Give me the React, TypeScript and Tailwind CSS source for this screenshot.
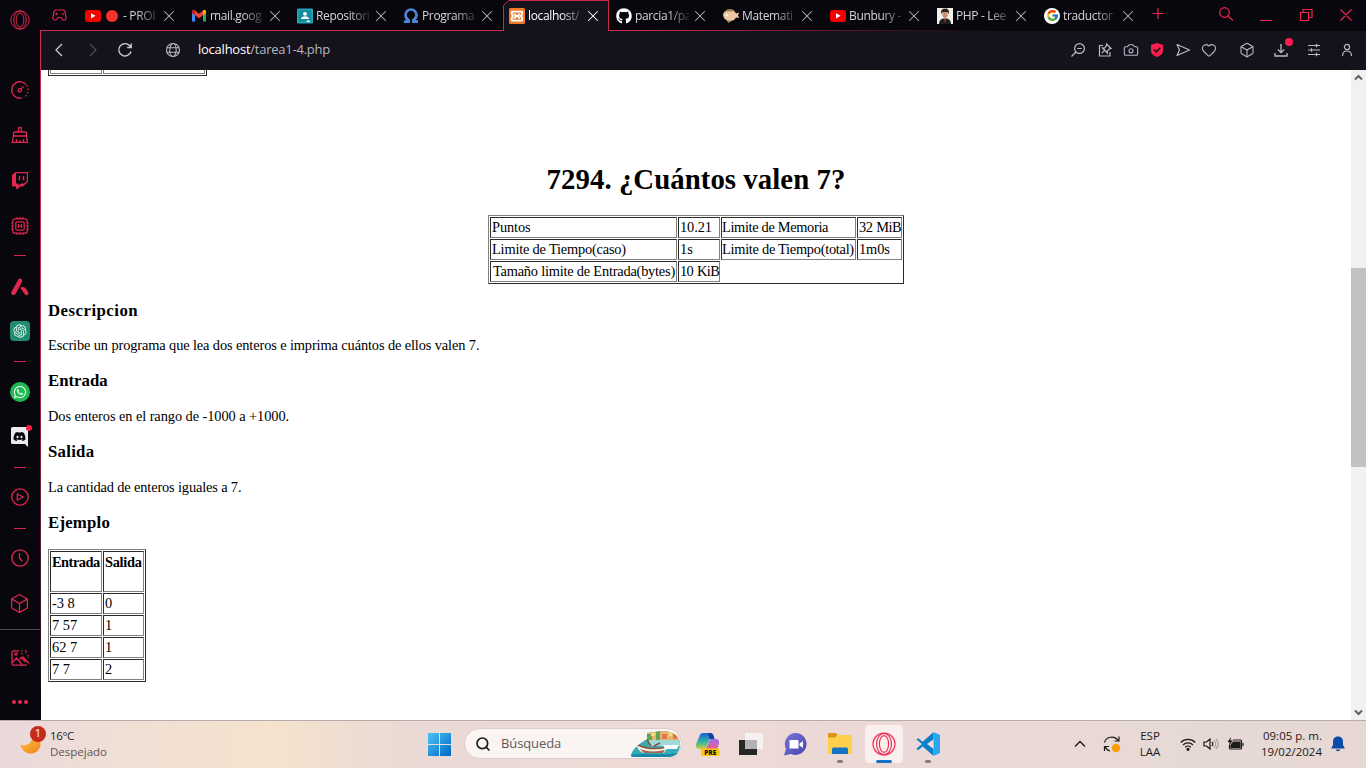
import type { ReactNode } from "react";
import { Box, Camera, Heart, X, Search } from "lucide-react";
import { FaGithub, FaWhatsapp, FaDiscord } from "react-icons/fa";
import { FcGoogle } from "react-icons/fc";
import { RiOpenaiFill } from "react-icons/ri";

const Opera = ({ className }: { className: string }) => (
  <svg viewBox="0 0 24 24" className={className} fill="none" stroke="currentColor" strokeWidth="1.2">
    <circle cx="12" cy="12" r="11" />
    <ellipse cx="12" cy="12" rx="7.5" ry="10.6" />
    <ellipse cx="12" cy="12" rx="4.6" ry="8.4" />
  </svg>
);

const YouTube = () => (
  <svg viewBox="0 0 16 16" className="size-4">
    <rect y="2" width="16" height="12" rx="3" fill="#f60000" />
    <path d="M6 5.2v5.2l4.6-2.6z" fill="#fff" />
  </svg>
);

const Gmail = () => (
  <svg viewBox="0 0 16 16" className="size-4">
    <path d="M1 3v10.5h3V7z" fill="#4285f4" />
    <path d="M15 3v10.5h-3V7z" fill="#34a853" />
    <path d="M1 5V3.6C1 2 3 1.600 4 2.500l4 3.300 4-3.300c1-.9 3-.5 3 1.100V5L8 10.300z" fill="#ea4335" />
    <path d="M12 2.500c1-.9 3-.5 3 1.100V5l-3 2.300z" fill="#fbbc04" />
    <path d="M4 2.500C3 1.600 1 2 1 3.600V5l3 2.300z" fill="#c5221f" />
  </svg>
);

const Classroom = () => (
  <svg viewBox="0 0 16 16" className="size-4">
    <rect width="16" height="15" y=".5" rx="1" fill="#26a5b5" />
    <rect x="1.500" y="2" width="13" height="12" fill="#128c9e" />
    <circle cx="8" cy="5.800" r="1.900" fill="#fff" />
    <path d="M4 11c0-2 2-2.800 4-2.800s4 .8 4 2.800z" fill="#fff" />
    <path d="M9.500 12.500h3.500v1.500H9.500z" fill="#e5f5f5" />
  </svg>
);

const Omega = () => (
  <svg viewBox="0 0 16 16" className="size-4" fill="none" stroke="#4d86d9" strokeWidth="2.700">
    <path d="M1 13.700h4.600v-1.500C3.500 10.800 2.500 9 2.500 7a5.500 5.500 0 0 1 11 0c0 2-1 3.800-3.100 5.200v1.500H15" />
  </svg>
);

const Xampp = () => (
  <svg viewBox="0 0 16 16" className="size-4">
    <rect width="16" height="16" rx="1.500" fill="#ee7a2a" />
    <g fill="none" stroke="#fff" strokeWidth="1.800">
      <path d="M3 3.600h10c.8 2.300.2 3.600-1.500 4.400 1.700.8 2.300 2.200 1.500 4.600H3C2.200 10.200 2.800 8.800 4.500 8 2.800 7.200 2.200 5.900 3 3.600z" strokeLinejoin="round" />
      <path d="M5.500 5.500c.3 1.700 1 2.300 2.500 2.300s2.200-.6 2.500-2.300M5.500 10.800c.3-1.700 1-2.600 2.500-2.600s2.200.9 2.500 2.600" strokeWidth="1.500" />
    </g>
  </svg>
);

const GitHub = () => <FaGithub className="size-4 text-white" />;

const Fish = () => (
  <svg viewBox="0 0 16 16" className="size-4">
    <path d="M0 7c1-4 4-5.500 7.500-5.500C10 1.500 12 3.500 13 5.500l3-1-1 3 1 2.500-3-.5c-1 2-2.500 3-4.500 3.300l-3 2-1.500-2.300C1.500 11.500.5 9.500 0 7z" fill="#ecc9a2" />
    <path d="M2 3.500 4 1.500l5-.3L12 3 8 3.500z" fill="#a37c52" />
    <circle cx="4" cy="7" r="1.500" fill="#f9eadb" />
    <path d="m4 12.500 2.500-.5 1.500 1-2.500 1.500z" fill="#b78a5c" />
  </svg>
);

const Portrait = () => (
  <svg viewBox="0 0 16 16" className="size-4">
    <path d="M0 0h16v16H0z" fill="#f0efe9" />
    <path d="M2 16c0-3 1.500-5 4-5.500h4c2.500.5 4 2.500 4 5.500z" fill="#202021" />
    <path d="M5.500 4h5v4L8.500 10.500h-1L5.500 8z" fill="#c98f73" />
    <path d="M4.500 6.500 4 3l2-2.200 4-.3L12 3l-.5 3.500-1-2.500h-5z" fill="#29211f" />
    <path d="m7 11 1 4 1-4z" fill="#b32b35" />
  </svg>
);

const Google = () => (
  <span className="flex size-4 items-center justify-center rounded-full bg-white">
    <FcGoogle className="size-[13px]" />
  </span>
);

type Tab = { title: string; icon: () => ReactNode; active?: boolean; dot?: boolean; wide?: boolean };

const tabs: Tab[] = [
  { title: "- PROI", icon: YouTube, dot: true },
  { title: "mail.goog", icon: Gmail },
  { title: "Repositori", icon: Classroom },
  { title: "Programa", icon: Omega },
  { title: "localhost/", icon: Xampp, active: true, wide: true },
  { title: "parcia1/pa", icon: GitHub, wide: true },
  { title: "Matemati", icon: Fish, wide: true },
  { title: "Bunbury -", icon: YouTube, wide: true },
  { title: "PHP - Lee", icon: Portrait, wide: true },
  { title: "traductor", icon: Google, wide: true },
];

function TabItem({ tab }: { tab: Tab }) {
  const Icon = tab.icon;
  return (
    <div className={`relative flex h-[31px] shrink-0 items-center pl-[6px] ${tab.wide ? "w-[107px]" : "w-[106px]"}`}>
      {tab.active && (
        <svg viewBox="0 0 107 31" className="absolute left-0 top-0 h-[31px] w-[107px]">
          <path d="M.5 31V5.500L5.500.5h100V31z" fill="#14121a" />
          <path d="M.5 31V5.500L5.500.5h100V31" fill="none" stroke="#c9284f" />
        </svg>
      )}
      <span className="relative flex w-4 shrink-0">
        <Icon />
      </span>
      <span
        className={`relative ml-[3px] flex w-[54px] items-center whitespace-nowrap text-[12px] leading-5 tracking-[-0.35px] [mask-image:linear-gradient(to_right,#000_60%,rgba(0,0,0,0.15))] ${tab.active ? "text-white" : "text-[#d5d4da]"}`}
      >
        {tab.dot && <i className="ml-[2px] mr-[5px] size-3 shrink-0 rounded-full bg-[#f5332e]" />}
        {tab.title}
      </span>
      <X className={`relative ml-[2px] size-[18px] shrink-0 ${tab.active ? "text-white" : "text-[#b5b3bb]"}`} strokeWidth={1.400} />
    </div>
  );
}

function Rail() {
  const dash = "h-px w-3 shrink-0 bg-[#d42450]";
  const box = "flex size-[22px] shrink-0 items-center justify-center";
  return (
    <aside className="flex w-10 shrink-0 flex-col items-center bg-[#08070d] text-[#e0274f]">
      <div className={`${box} mt-[9px]`}><Opera className="size-5" /></div>
      <div className={`${box} mt-12`}>
        <svg viewBox="0 0 20 20" className="size-5" fill="none" stroke="currentColor" strokeWidth="1.300">
          <path d="M12 17.900A8.200 8.200 0 1 1 16 4.500" />
          <path d="M16.500 5.200a8.200 8.200 0 0 1-3 12.300" strokeDasharray="1.500 2" />
          <circle cx="9.700" cy="10.300" r="1.700" />
          <path d="m11 9 2.500-2.500" />
        </svg>
      </div>
      <div className={`${box} mt-[23px]`}>
        <svg viewBox="0 0 20 20" className="size-5" fill="none" stroke="currentColor" strokeWidth="1.300">
          <path d="M8.500 7V3.200c0-1 2.800-1 2.800 0V7M3.500 11V8.500C3.500 7.500 4 7 5 7h10c1 0 1.500.5 1.500 1.500V11zM3.500 11 2.300 17.400h15.200L16.500 11M6.500 17v-3M10.200 17v-2M13.500 17v-3" />
        </svg>
      </div>
      <div className={`${box} mt-[23px]`}>
        <svg viewBox="0 0 20 20" className="size-5">
          <path d="M2 5 5.500 2H18v9.500l-5 5H10L7.500 19H6v-2.500H2z" fill="currentColor" />
          <path d="M6 3.200h10.800V11L14 13.500h-3l-2.500 2v-2H6z" fill="#08070d" />
          <path d="M9.500 6v4.300M13.500 6v4.300" stroke="currentColor" strokeWidth="1.500" />
        </svg>
      </div>
      <div className={`${box} mt-6`}>
        <svg viewBox="0 0 20 20" className="size-5" fill="none" stroke="currentColor" strokeWidth="1.200">
          <rect x="2.800" y="2.800" width="14.400" height="14.400" rx="2" />
          <rect x="5.800" y="5.800" width="8.400" height="8.400" rx="1.500" />
          <path d="M8.500 8v4m3-4v4m-3-2h3M7 1v2m3-2v2m3-2v2M7 17v2m3-2v2m3-2v2M1 7h2M1 10h2M1 13h2m14-6h2m-2 3h2m-2 3h2" />
        </svg>
      </div>
      <div className={`${dash} mt-[18px]`} />
      <div className={`${box} mt-5`}>
        <svg viewBox="0 0 20 20" className="size-5" fill="currentColor">
          <path d="M8.200 2.800c.7-1.300 2-1.500 3.200-.8 1 .7 1.100 1.800.5 2.900L5.700 16.800c-.8 1.300-2.200 1.700-3.400 1-1.200-.7-1.500-1.900-.7-3.200zM10.200 10.800c2.500-1.500 5.400-.5 6.500 1.700l1.500 2.900c.5 1.300 0 2.500-1 2.800-1.100.3-1.900-.3-2.600-1.100z" />
        </svg>
      </div>
      <div className={`${box} mt-[22px]`}>
        <span className="flex size-5 items-center justify-center rounded-[4px] bg-[#218c70] text-[#e4f5f0]"><RiOpenaiFill className="size-4" /></span>
      </div>
      <div className={`${dash} mt-[19px]`} />
      <div className={`${box} mt-[19px]`}>
        <span className="flex size-5 items-center justify-center rounded-full bg-[#1fb954] text-white"><FaWhatsapp className="size-[14px]" /></span>
      </div>
      <div className={`${box} relative mt-[23px]`}>
        <svg viewBox="0 0 20 20" className="size-5">
          <path d="M2.500 0h14A1.500 1.500 0 0 1 18 1.500V20l-3-3H2.500A1.500 1.500 0 0 1 1 15.500v-14A1.500 1.500 0 0 1 2.500 0z" fill="#ececef" />
        </svg>
        <FaDiscord className="absolute left-[4px] top-[4px] size-[13px] text-[#08070d]" />
        <i className="absolute -right-px -top-px size-[6px] rounded-full bg-[#fa1e4e]" />
      </div>
      <div className={`${dash} mt-[19px]`} />
      <div className={`${box} mt-[18px]`}>
        <svg viewBox="0 0 20 20" className="size-5" fill="none" stroke="currentColor" strokeWidth="1.300">
          <circle cx="10" cy="10" r="8.200" />
          <path d="M7.300 7v6l6-3z" strokeLinejoin="round" />
        </svg>
      </div>
      <div className={`${dash} mt-5`} />
      <div className={`${box} mt-[18px]`}>
        <svg viewBox="0 0 20 20" className="size-5" fill="none" stroke="currentColor" strokeWidth="1.300">
          <circle cx="10" cy="10" r="8.200" />
          <path d="M9.500 5v5l2.800 3.200" />
        </svg>
      </div>
      <div className={`${box} mt-[23px]`}><Box className="mr-px size-[21px]" strokeWidth={1.400} /></div>
      <div className="mt-[15px] h-px w-full shrink-0 bg-[#4a494e]" />
      <div className={`${box} mt-[17px]`}>
        <svg viewBox="0 0 20 20" className="size-5" fill="none" stroke="currentColor" strokeWidth="1.300">
          <path d="M9 2.800H3.500A1.500 1.500 0 0 0 2 4.300v11.400c0 .8.700 1.500 1.500 1.500H17M2 15l4.500-5L12 16.500M9.500 11.500l2-2 4 4.500M12.500 8.500l6.500 7" />
          <circle cx="6" cy="6" r="1.100" />
          <path d="M11 2.800h2m2 0h2.500M12 5v2m4-4v3m2 1v3" strokeDasharray="1.500 1" />
        </svg>
      </div>
      <div className={`${box} mt-[22px] gap-[2px]`}>
        <i className="size-1 rounded-full bg-current" />
        <i className="size-1 rounded-full bg-current" />
        <i className="size-1 rounded-full bg-current" />
      </div>
    </aside>
  );
}

function TabBar() {
  return (
    <div className="relative flex h-[31px] shrink-0 bg-[#08070d]">
      <div className="absolute bottom-0 left-0 h-px w-full bg-linear-to-r from-[#d42a54] from-45% to-transparent to-72%" />
      <div className="flex h-[30px] w-[39px] shrink-0 items-center pl-[12px] text-[#e0274f]">
        <svg viewBox="0 0 15 12" className="h-3 w-[15px]" fill="none" stroke="currentColor" strokeWidth="1.200">
          <path d="M3.500 1h8L13 2.500 14.200 9 13 11h-2L9 8.500H6L4 11H2L.8 9 2 2.500zM4.500 3.700v2.600M3.200 5h2.600M9.600 5h.1M11 3.700v2.600" />
        </svg>
      </div>
      {tabs.map((t, i) => <TabItem key={i} tab={t} />)}
      <div className="flex h-[30px] flex-1 items-center pl-[5px] text-[#f0244f]">
        <svg viewBox="0 0 216 30" className="h-[30px] w-[216px] shrink-0" fill="none" stroke="currentColor" strokeWidth="1.200">
          <path d="M2.500 13.500h11M8 8v11" />
          <circle cx="74.500" cy="12.500" r="4.800" />
          <path d="m78 16 5 4.500M110 20.500h12M150.500 12.500h8v8h-8zM153 12.500v-3h9v8h-3.500M190.500 9.500l11 11M201.500 9.500l-11 11" />
        </svg>
      </div>
    </div>
  );
}

function Toolbar() {
  const slot = "flex h-full shrink-0 items-center justify-center";
  return (
    <div className="flex h-[39px] shrink-0 items-center bg-[#14121a] pb-px text-[#bcb8cb]">
      <div className={`${slot} w-[35px]`}>
        <svg viewBox="0 0 12 16" className="h-4 w-3" fill="none" stroke="#cdcad8" strokeWidth="1.300"><path d="M9 2 3 8l6 6" /></svg>
      </div>
      <div className={`${slot} w-[33px]`}>
        <svg viewBox="0 0 12 16" className="h-4 w-3" fill="none" stroke="#4b4855" strokeWidth="1.300"><path d="m3 2 6 6-6 6" /></svg>
      </div>
      <div className={`${slot} w-[32px]`}>
        <svg viewBox="0 0 16 16" className="size-4" fill="none" stroke="#cdcad8" strokeWidth="1.400"><path d="M14 9.500A6.200 6.200 0 1 1 12.500 3.500L14 5M14.200 1.500V5.500H10.200" /></svg>
      </div>
      <div className={`${slot} ml-2 w-[47px]`}>
        <svg viewBox="0 0 16 16" className="size-4" fill="none" stroke="currentColor" strokeWidth="1.100">
          <circle cx="8" cy="8" r="6.500" /><ellipse cx="8" cy="8" rx="3.200" ry="6.500" /><path d="M1.800 5.800h12.400M1.800 10.200h12.400" />
        </svg>
      </div>
      <p className="ml-[2px] text-[13px] tracking-[-0.24px] text-[#b9b7c4]"><span className="text-white">localhost</span>/tarea1-4.php</p>
      <div className="ml-auto flex h-full items-center">
        <div className={`${slot} w-[26px]`}>
          <svg viewBox="0 0 16 16" className="size-4" fill="none" stroke="currentColor" strokeWidth="1.200"><circle cx="9.500" cy="6.500" r="4.900" /><path d="M6 10 1.500 14.500M7.300 6.500h4.400" /></svg>
        </div>
        <div className={`${slot} w-[27px]`}>
          <svg viewBox="0 0 16 16" className="size-4" fill="none" stroke="currentColor" strokeWidth="1.200"><path d="M6 3.500H2.500v10.500h10.500V10M4.800 11.200 8 8M9.500 2l4.500 4.500-1.500.3-2.300 2.200.2 2L5.500 6l2 .2L9.300 4z" /></svg>
        </div>
        <div className={`${slot} w-[26px]`}><Camera className="size-4" strokeWidth={1.600} /></div>
        <div className={`${slot} w-[26px]`}>
          <svg viewBox="0 0 16 16" className="size-4"><path d="M8 1 14 2.800v5.700c0 3.200-2.500 5.500-6 6.500C4.500 14 2 11.700 2 8.500V2.800z" fill="#fa1e4e" /><path d="m5 7.500 2.300 2.300 4-4" fill="none" stroke="#14121a" strokeWidth="1.600" /></svg>
        </div>
        <div className={`${slot} w-[26px]`}>
          <svg viewBox="0 0 16 16" className="size-4" fill="none" stroke="currentColor" strokeWidth="1.200"><path d="M2 2.500 14.500 8 2 13.500 4.500 8z" strokeLinejoin="round" /></svg>
        </div>
        <div className={`${slot} w-[25px]`}><Heart className="size-4" strokeWidth={1.600} /></div>
        <div className={`${slot} ml-[9px] w-[34px]`}><Box className="size-4" strokeWidth={1.600} /></div>
        <div className={`${slot} relative w-[33px]`}>
          <svg viewBox="0 0 16 16" className="size-4" fill="none" stroke="currentColor" strokeWidth="1.300"><path d="M8 2v8.500M4.800 7.500 8 10.700l3.200-3.200M2 11v3h12v-3" /></svg>
          <i className="absolute right-1 top-[7px] size-2 rounded-full bg-[#fa1e4e]" />
        </div>
        <div className={`${slot} w-[33px]`}>
          <svg viewBox="0 0 14 14" className="size-[14px]" fill="none" stroke="currentColor" strokeWidth="1.200"><path d="M1 2.500h12M1 7h12M1 11.500h12M9.500.8v3.400M4.500 5.300v3.400M9.500 9.800v3.400" /></svg>
        </div>
        <div className={`${slot} mr-[3px] w-[33px]`}>
          <svg viewBox="0 0 14 14" className="size-[14px]" fill="none" stroke="currentColor" strokeWidth="1.200"><circle cx="7" cy="4" r="2.600" /><path d="M2.500 13c0-4 2-5 4.500-5s4.500 1 4.500 5" /></svg>
        </div>
      </div>
    </div>
  );
}

const tableStyle =
  "table-fixed border-separate border-spacing-[1px] border border-b-[#2c2c2c] border-l-[#808080] border-r-[#2c2c2c] border-t-[#808080] text-[14.4px] leading-[18px]";
const cell =
  "whitespace-nowrap border border-b-[#808080] border-l-[#2c2c2c] border-r-[#808080] border-t-[#2c2c2c] p-0 text-left align-top";
const row = `${cell} h-[21px]`;
const head = `${cell} h-[41px] pt-px`;

const sections = [
  { title: "Descripcion", text: "Escribe un programa que lea dos enteros e imprima cuántos de ellos valen 7.", box: "h-[70px]", heading: "tracking-[0.48px]", body: "mt-[15px] tracking-[-0.12px]" },
  { title: "Entrada", text: "Dos enteros en el rango de -1000 a +1000.", box: "h-[71px]", heading: "", body: "mt-4 tracking-[-0.08px]" },
  { title: "Salida", text: "La cantidad de enteros iguales a 7.", box: "h-[71px]", heading: "tracking-[0.25px]", body: "mt-4 tracking-[-0.15px]" },
];

const samples = [["-3 8", "0"], ["7 57", "1"], ["62 7", "1"], ["7 7", "2"]];

function Page() {
  return (
    <main className="flex min-w-0 flex-1 flex-col overflow-hidden bg-white pl-[7px] font-['Liberation_Serif',serif] text-black">
      <div className="flex h-[6px] w-[159px] shrink-0 border-x border-b border-[#2c2c2c] px-px pb-px">
        <div className="mr-px w-[52px] border-x border-b border-[#808080]" />
        <div className="flex-1 border-x border-b border-[#808080]" />
      </div>
      <h1 className="mt-[86px] pr-[7px] text-center text-[28.8px] font-bold leading-[34px] tracking-[0.05px]">7294. ¿Cuántos valen 7?</h1>
      <table className={`${tableStyle} ml-[440px] mt-[19px] w-[416px] shrink-0`}>
        <colgroup>
          <col className="w-[187px]" /><col className="w-[42px]" /><col className="w-[135px]" /><col className="w-[45px]" />
        </colgroup>
        <tbody>
          <tr>
            <td className={`${row} pl-px tracking-[-0.1px]`}>Puntos</td>
            <td className={`${row} pl-px tracking-[-0.1px]`}>10.21</td>
            <td className={`${row} tracking-[-0.34px]`}>Limite de Memoria</td>
            <td className={`${row} pl-px tracking-[-0.55px] [word-spacing:1px]`}>32 MiB</td>
          </tr>
          <tr>
            <td className={`${row} pl-px tracking-[-0.2px]`}>Limite de Tiempo(caso)</td>
            <td className={`${row} pl-px`}>1s</td>
            <td className={`${row} tracking-[-0.28px]`}>Limite de Tiempo(total)</td>
            <td className={`${row} pl-px tracking-[-0.1px]`}>1m0s</td>
          </tr>
          <tr>
            <td className={`${row} pl-[2px] tracking-[-0.22px]`}>Tamaño limite de Entrada(bytes)</td>
            <td className={`${row} pl-px tracking-[-0.65px] [word-spacing:1px]`}>10 KiB</td>
          </tr>
        </tbody>
      </table>
      <div className="pt-[17px]">
        {sections.map((s) => (
          <section key={s.title} className={s.box}>
            <h3 className={`text-[16.8px] font-bold leading-5 ${s.heading}`}>{s.title}</h3>
            <p className={`text-[14.4px] leading-[18px] ${s.body}`}>{s.text}</p>
          </section>
        ))}
        <h3 className="text-[16.8px] font-bold leading-5 tracking-[0.2px]">Ejemplo</h3>
      </div>
      <table className={`${tableStyle} mt-4 w-[98px] shrink-0`}>
        <colgroup><col className="w-[52px]" /><col className="w-[41px]" /></colgroup>
        <tbody>
          <tr><th className={`${head} pl-px tracking-[-0.5px]`}>Entrada</th><th className={`${head} pl-px tracking-[-0.3px]`}>Salida</th></tr>
          {samples.map(([a, b]) => <tr key={a}><td className={`${row} pl-px`}>{a}</td><td className={`${row} pl-px`}>{b}</td></tr>)}
        </tbody>
      </table>
    </main>
  );
}

function Scrollbar() {
  return (
    <div className="flex w-[15px] shrink-0 flex-col items-center justify-between bg-[#f1f1f1] py-1">
      <svg viewBox="0 0 9 7" className="h-[7px] w-[9px]" fill="none" stroke="#606060" strokeWidth="2"><path d="m1 5.500 3.500-3.500L8 5.500" /></svg>
      <div className="mt-[187px] mb-auto h-[199px] w-full bg-[#c1c1c1]" />
      <svg viewBox="0 0 9 7" className="h-[7px] w-[9px]" fill="none" stroke="#606060" strokeWidth="2"><path d="M1 1.500 4.500 5 8 1.500" /></svg>
    </div>
  );
}

function Taskbar() {
  return (
    <footer className="flex h-12 shrink-0 items-center border-t border-[#b5adab] bg-[linear-gradient(to_right,#ead8db_0%,#efdfd5_8%,#f5e3ce_20%,#f0dfd0_24%,#e9dad5_30%,#eedad6_50%,#ebd9d7_70%,#e6d9d5_90%,#e8d8d3_100%)] pb-[2px] text-[#1c1a1a]">
      <div className="relative ml-5 h-9 w-[30px]">
        <svg viewBox="0 0 22 22" className="absolute left-0 top-[10px] size-[22px]">
          <defs><linearGradient id="moon" x1="0" x2="1" y1="0" y2="1"><stop stopColor="#fbc34a" /><stop offset="1" stopColor="#ef8213" /></linearGradient></defs>
          <path d="M.3 8.500c5 2 11 0 12.200-7.500h5c8 8-1 20-11 15.700C2.800 15 .8 12 .3 8.500z" fill="url(#moon)" />
        </svg>
        <span className="absolute left-[10px] top-0 flex size-4 items-center justify-center rounded-full bg-[#c42b1c] text-[11px] text-white">1</span>
      </div>
      <div className="w-[100px] text-[11.5px] leading-4">
        <p className="tracking-[-0.35px]">16°C</p>
        <p className="text-[#5e5652]">Despejado</p>
      </div>
      <svg viewBox="0 0 24 24" className="ml-[278px] size-6">
        <defs><linearGradient id="win" x1="0" x2="1" y1="0" y2="1"><stop stopColor="#4cc4f5" /><stop offset="1" stopColor="#0067c5" /></linearGradient></defs>
        <path d="M0 1h11v11H0zM12 1h11v11H12zM0 13h11v11H0zM12 13h11v11H12z" fill="url(#win)" />
      </svg>
      <div className="ml-3 flex h-[31px] w-[218px] items-center rounded-full border border-[#dccbc9] bg-[#faf4f3] pl-[10px]">
        <Search className="size-4" strokeWidth={2.500} />
        <span className="ml-[10px] text-[13px] tracking-[-0.1px] text-[#5d5858]">Búsqueda</span>
        <svg viewBox="0 0 50 26" className="ml-auto mr-0 h-[26px] w-[50px]">
          <defs><clipPath id="art"><path d="M0 24c2-7 7-10 16-16l0-6 15-2c10 0 18 4 18 13S44 26 36 26H4c-2 0-4 0-4-2z" /></clipPath></defs>
          <g clipPath="url(#art)">
            <path d="M0 0h50v26H0z" fill="#35aab8" />
            <path d="M15 0h35v9H15z" fill="#e8b56a" />
            <path d="M16 3h5v7h-5zm9-3h4v9h-4z" fill="#5fa455" />
            <path d="M31 3h5v5h-5zM42 3h4v5h-4z" fill="#dd7a55" />
            <path d="M20 2h4v3h-4zm18-1h3v4h-3z" fill="#f8d785" />
            <path d="M18 9h32v6H18z" fill="#9ed9d8" />
            <path d="M6 14c6 3 20 4 31 2l-4 6H12c-4-2-6-5-6-8z" fill="#f4eee5" />
            <path d="M7 14c8 4 20 4 29 2M16 9l4 6m9-3-6 3" fill="none" stroke="#8b5138" strokeWidth="1.500" />
            <path d="M32 14h16l-2 4H34z" fill="#fff" />
            <path d="M9 18c7 3 16 3 25 1l-2 3H13z" fill="#a76550" />
            <path d="M0 24c12-3 34 2 50-3v5H0z" fill="#1786ab" />
          </g>
        </svg>
      </div>
      <svg viewBox="0 0 24 24" className="ml-[14px] size-6">
        <defs>
          <linearGradient id="cpa" x1="0" x2="0" y1="0" y2="1"><stop stopColor="#1c62d9" /><stop offset=".55" stopColor="#2fb6a0" /><stop offset="1" stopColor="#c9cf3b" /></linearGradient>
          <linearGradient id="cpb" x1="0" x2="0" y1="0" y2="1"><stop stopColor="#9d6bf0" /><stop offset="1" stopColor="#f2637a" /></linearGradient>
        </defs>
        <path d="M7 1h7c2 0 3 1 3.500 3l1 3h-5l-4 10H3c-2.500 0-3.500-2-3-4.500L3.500 4C4 2 5 1 7 1z" fill="url(#cpa)" />
        <path d="M14 7h6c2.500 0 3.500 2 3 4.500L21 18H9.500z" fill="url(#cpb)" />
        <path d="M12 1h2c2 0 3 1 3.500 3l1 3h-5z" fill="#143f9b" />
        <rect x="5" y="16.500" width="18.500" height="7.500" rx="1.500" fill="#fdc514" />
        <text x="14.300" y="22.800" textAnchor="middle" fontSize="6.600" fontWeight="800" fill="#201300">PRE</text>
      </svg>
      <svg viewBox="0 0 24 24" className="ml-[19px] size-6">
        <path d="M0 8h18v15H0z" fill="#262626" />
        <path d="M6 1h18v16H6z" fill="#f6f5f4" opacity=".85" />
        <path d="M6 8h12v9H6z" fill="#b4b3b3" />
      </svg>
      <svg viewBox="0 0 24 24" className="ml-[21px] size-6">
        <defs><linearGradient id="chat" x1="0" x2="1" y1="0" y2="1"><stop stopColor="#7a76d8" /><stop offset="1" stopColor="#4446ae" /></linearGradient></defs>
        <path d="M12 1a11 11 0 1 1-5 21L0 23.500 2 17A11 11 0 0 1 12 1z" fill="url(#chat)" />
        <path d="M5.500 8h9v8.500h-9zM15.500 11.500 19 9v7l-3.500-2.500z" fill="#fff" />
      </svg>
      <div className="relative ml-5 size-6">
        <svg viewBox="0 0 24 24" className="size-6">
          <path d="M0 2.500C0 1.500.5 1 1.500 1H8l3 3-2 2H0z" fill="#d99514" />
          <path d="M9 3h13.500c1 0 1.500.5 1.500 1.500V22H0V5.500h7z" fill="#fcd04b" />
          <path d="M4 22v-4.500C4 16 5 15.500 6 15.500h12c1 0 2 .5 2 2V22z" fill="#1573c4" />
        </svg>
        <i className="absolute -bottom-[7px] left-[9px] h-[3px] w-[6px] rounded-full bg-[#857b7a]" />
      </div>
      <div className="relative ml-[13px] flex size-[38px] items-center justify-center rounded bg-[#f8efee] text-[#f0325a]">
        <Opera className="size-6" />
        <i className="absolute bottom-0 h-[3px] w-4 rounded-full bg-[#1672c4]" />
      </div>
      <div className="relative ml-[13px] size-6">
        <svg viewBox="0 0 24 24" className="size-6">
          <path d="M17.500 0 6.700 9.700 2.300 6.200.5 7.200v.3L6 12 .5 16.600v.3l1.800 1L6.700 14.400 17.500 24z" fill="#0b7fc9" />
          <path d="M17.500 0 24 3v18l-6.500 3z" fill="#2aa6ee" />
          <path d="M17.500 7.200v9.700L11 12z" fill="#eddad7" />
        </svg>
        <i className="absolute -bottom-[7px] left-[9px] h-[3px] w-[6px] rounded-full bg-[#857b7a]" />
      </div>
      <svg viewBox="0 0 12 8" className="ml-[134px] h-2 w-3" fill="none" stroke="currentColor" strokeWidth="1.400"><path d="m1 6.500 5-5 5 5" /></svg>
      <svg viewBox="0 0 18 18" className="ml-[17px] size-[18px]" fill="none" stroke="currentColor" strokeWidth="1.200">
        <path d="M1.500 7.500C3 1 12 .5 15.500 6M16 1.500V6h-4.500M7 16c-2.500-.5-4-2-5-4.500M1.500 16v-4.500H6" />
        <circle cx="13" cy="13" r="4.200" fill="#fb9d0b" stroke="none" />
      </svg>
      <div className="ml-[15px] w-[28px] text-center text-[11.5px] leading-4"><p>ESP</p><p>LAA</p></div>
      <svg viewBox="0 0 16 14" className="ml-[16px] h-[14px] w-4" fill="none" stroke="currentColor" strokeWidth="1.200">
        <path d="M.8 5.500a10 10 0 0 1 14.400 0M3 8a7 7 0 0 1 10 0M5.200 10.200a4 4 0 0 1 5.600 0" /><circle cx="8" cy="12.300" r="1" fill="currentColor" />
      </svg>
      <svg viewBox="0 0 16 14" className="ml-[7px] h-[14px] w-4" fill="none" stroke="currentColor" strokeWidth="1.200">
        <path d="M1 5h2.500L7 2v10L3.500 9H1zM9 5c1 1 1 3 0 4" /><path d="M11 3.500c2 2 2 5 0 7M13 2c2.500 3 2.500 7 0 10" stroke="#aaa09f" />
      </svg>
      <svg viewBox="0 0 17 14" className="ml-2 h-[14px] w-[17px]" fill="none" stroke="currentColor" strokeWidth="1.200">
        <path d="M6 3h7.500c.6 0 1 .4 1 1v7c0 .6-.4 1-1 1h-10c-.6 0-1-.4-1-1V8" /><path d="M6.500 5H13v5.300H4V8z" fill="currentColor" /><path d="M16 6v3" /><path d="M4 0 .5 5h2L2 8.500 6 3.500H3.500z" fill="currentColor" stroke="none" />
      </svg>
      <div className="ml-auto whitespace-nowrap text-right text-[11.5px] leading-4"><p>09:05 p. m.</p><p>19/02/2024</p></div>
      <svg viewBox="0 0 14 16" className="ml-[9px] mr-[21px] h-4 w-[14px]" fill="#0b4ba8"><path d="M7 .5c3.500 0 5 2.500 5 5V9l1.800 3.500H.2L2 9V5.500c0-2.500 1.500-5 5-5zM4.800 13.500h4.400c-.3 2.200-4.100 2.200-4.400 0z" /></svg>
    </footer>
  );
}

export default function App() {
  return (
    <div className="flex h-[768px] w-[1366px] flex-col overflow-hidden font-['Open_Sans','Noto_Sans',sans-serif]">
      <div className="flex min-h-0 flex-1">
        <Rail />
        <div className="flex min-w-0 flex-1 flex-col">
          <TabBar />
          <div className="flex min-h-0 flex-1">
            <div className="w-px shrink-0 bg-linear-to-b from-[#d42a54] from-40% to-[#08070d]" />
            <div className="flex min-w-0 flex-1 flex-col">
              <Toolbar />
              <div className="flex min-h-0 flex-1">
                <Page />
                <Scrollbar />
              </div>
            </div>
          </div>
        </div>
      </div>
      <Taskbar />
    </div>
  );
}
